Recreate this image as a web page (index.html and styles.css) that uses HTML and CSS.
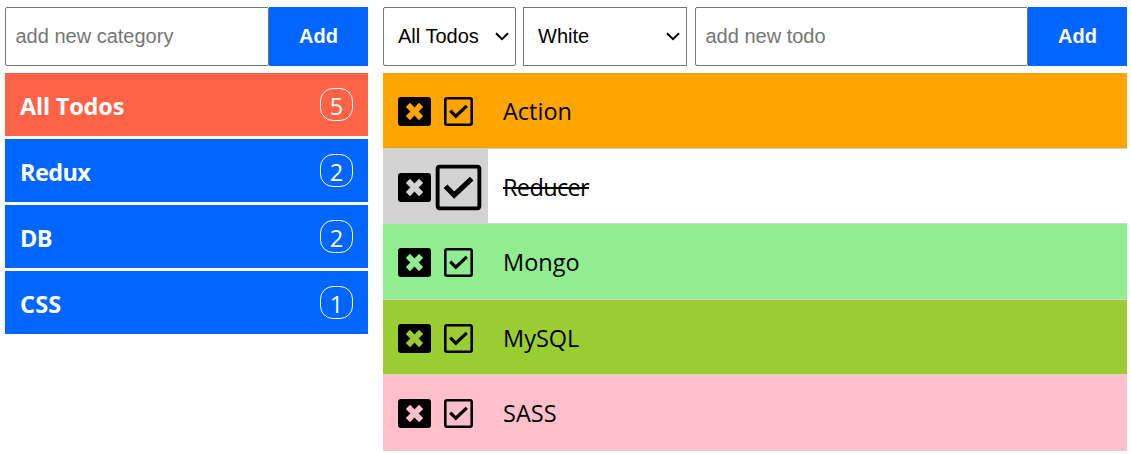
FILE: index.html
```
<!DOCTYPE html>
<html lang="en">
<head>
<meta charset="utf-8">
<title>Todos</title>
<link rel="stylesheet" href="styles.css">
</head>
<body>
<svg class="sprite" width="0" height="0">
  <symbol id="delete" viewBox="0 0 33 29">
    <path fill-rule="evenodd" d="M3 0h27a3 3 0 0 1 3 3v23a3 3 0 0 1-3 3H3a3 3 0 0 1-3-3V3a3 3 0 0 1 3-3zM12 5.8L7.8 9.9l4.6 4.6-4.6 4.6 4.2 4.2 4.5-4.7 4.5 4.7 4.2-4.2-4.6-4.6 4.6-4.6L21 5.8l-4.5 4.6z"/>
  </symbol>
  <symbol id="check" viewBox="0 0 29 29">
    <rect x="1.3" y="1.3" width="26.4" height="26.4" rx="1.7" fill="none" stroke="currentColor" stroke-width="2.6"/>
    <path d="M6.3 13.7l5.5 5.6L22.8 8.9" fill="none" stroke="currentColor" stroke-width="3.3"/>
  </symbol>
  <symbol id="chevron" viewBox="0 0 14 9">
    <path d="M1 1.2l6 6 6-6" fill="none" stroke="currentColor" stroke-width="2"/>
  </symbol>
</svg>
<main class="app">
  <section class="categories">
    <form class="bar">
      <input class="field" type="text" placeholder="add new category">
      <button class="add" type="button">Add</button>
    </form>
    <ul class="category-list">
      <li class="category active"><span class="name name-all">All Todos</span><span class="count">5</span></li>
      <li class="category"><span class="name">Redux</span><span class="count">2</span></li>
      <li class="category"><span class="name">DB</span><span class="count">2</span></li>
      <li class="category"><span class="name name-css">CSS</span><span class="count">1</span></li>
    </ul>
  </section>
  <section class="todos">
    <form class="bar">
      <div class="pick-wrap pick-category"><select class="pick"><option>All Todos</option></select><svg class="chevron"><use href="#chevron"/></svg></div>
      <div class="pick-wrap pick-color"><select class="pick"><option>White</option></select><svg class="chevron"><use href="#chevron"/></svg></div>
      <input class="field" type="text" placeholder="add new todo">
      <button class="add" type="button">Add</button>
    </form>
    <ul class="todo-list">
      <li class="todo orange"><span class="actions"><svg class="delete"><use href="#delete"/></svg><svg class="check"><use href="#check"/></svg></span><span class="text">Action</span></li>
      <li class="todo done"><span class="actions"><svg class="delete"><use href="#delete"/></svg><svg class="check"><use href="#check"/></svg></span><span class="text">Reducer</span></li>
      <li class="todo green"><span class="actions"><svg class="delete"><use href="#delete"/></svg><svg class="check"><use href="#check"/></svg></span><span class="text">Mongo</span></li>
      <li class="todo lime"><span class="actions"><svg class="delete"><use href="#delete"/></svg><svg class="check"><use href="#check"/></svg></span><span class="text">MySQL</span></li>
      <li class="todo pink"><span class="actions"><svg class="delete"><use href="#delete"/></svg><svg class="check"><use href="#check"/></svg></span><span class="text">SASS</span></li>
    </ul>
  </section>
</main>
</body>
</html>
```
FILE: styles.css
```
* { box-sizing: border-box; }
body { margin: 0; background: #fff; color: #000; font-family: "Open Sans", sans-serif; font-size: 23.5px; }
ul { list-style: none; margin: 0; padding: 0; }
.sprite { display: block; }
.app { display: grid; grid-template-columns: 363px 744px; gap: 15px; padding: 7px 4px 0 5px; }
.bar { display: flex; height: 59px; margin: 0 0 7px; }
.field, .pick, .add { margin: 0; font-family: "Liberation Sans", Arial, sans-serif; font-size: 20px; }
.field { flex: 1; min-width: 0; border: 1px solid #767676; border-radius: 2px; padding: 0 9px 1px 9.5px; background: #fff; }
.field::placeholder { color: #757575; }
.add { width: 99px; border: 0; padding: 0; background: #06f; color: #fff; font-weight: bold; }
.pick-wrap { position: relative; }
.pick { appearance: none; display: block; width: 100%; height: 100%; padding: 0 0 1px 14px; border: 1px solid #767676; border-radius: 2px; background: #fff; color: #000; }
.pick-category { width: 133px; margin-right: 7px; }
.pick-color { width: 164px; margin-right: 8px; }
.pick-color .pick { border-radius: 0; }
.chevron { position: absolute; top: 25px; right: 7px; width: 14px; height: 9px; pointer-events: none; }
.category-list { display: grid; gap: 3px; }
.category { display: flex; justify-content: space-between; align-items: flex-start; height: 63px; padding: 15px; background: #06f; color: #fff; }
.category.active { background: tomato; }
.name { font-weight: bold; line-height: 36px; letter-spacing: -0.6px; }
.name-all { letter-spacing: -0.2px; }
.name-css { letter-spacing: 0.2px; }
.count { width: 33px; height: 33px; border: 1px solid #fff; border-radius: 13px; text-align: center; line-height: 34px; }
.todo-list { display: grid; grid-template-rows: 76px 75px 76px 75px 76px; }
.todo { display: flex; border-bottom: 1px solid lightgray; }
.actions { display: flex; align-items: flex-start; gap: 13px; width: 105px; padding: 24px 0 0 15px; }
.delete { width: 33px; height: 29px; }
.check { width: 29px; height: 29px; }
.text { padding-left: 15px; line-height: 77px; }
.orange { background: orange; }
.green { background: lightgreen; }
.lime { background: yellowgreen; }
.pink { background: pink; }
.done .actions { background: lightgray; }
.done .check { transform: scale(1.59); }
.done .text { letter-spacing: -0.65px; text-decoration: line-through; text-decoration-thickness: 2px; }
```
